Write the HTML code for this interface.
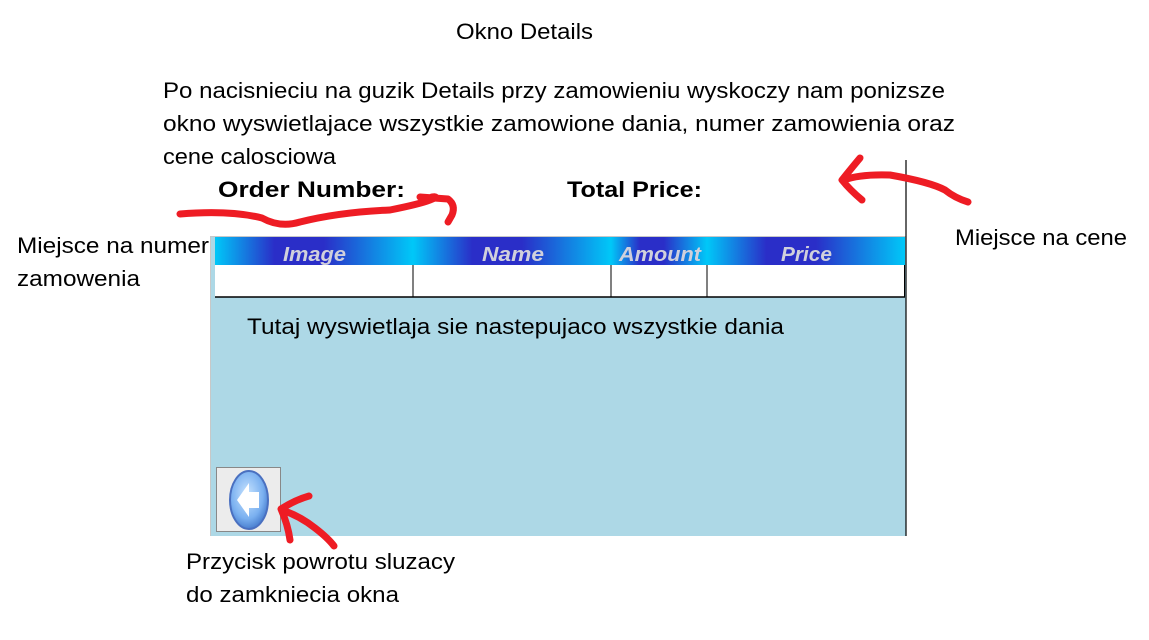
<!DOCTYPE html>
<html><head><meta charset="utf-8"><style>
body{margin:0;width:1149px;height:640px;background:#fff;overflow:hidden;position:relative}
svg{position:absolute;left:0;top:0}
</style></head><body>
<svg width="1149" height="640" xmlns="http://www.w3.org/2000/svg" font-family="Liberation Sans, sans-serif">
<defs>
<linearGradient id="g" x1="0" x2="1" y1="0" y2="0">
<stop offset="0" stop-color="#00c8f8"/><stop offset="0.3" stop-color="#2a2ec8"/><stop offset="0.55" stop-color="#2a2ec8"/><stop offset="1" stop-color="#00c8f8"/>
</linearGradient>
<radialGradient id="b" cx="0.45" cy="0.4" r="0.6"><stop offset="0" stop-color="#c8e4ff"/><stop offset="0.7" stop-color="#7ab0f0"/><stop offset="1" stop-color="#4a80d0"/></radialGradient>
</defs>
<rect x="210" y="236" width="696" height="300" fill="#add8e6"/>
<line x1="210.5" y1="236" x2="210.5" y2="536" stroke="#c8c8c8"/>
<line x1="210" y1="236.5" x2="906" y2="236.5" stroke="#c8c8c8"/>
<line x1="906" y1="160" x2="906" y2="536" stroke="#000" stroke-width="1.2"/>
<rect x="215" y="237" width="198" height="28" fill="url(#g)"/>
<rect x="413" y="237" width="198" height="28" fill="url(#g)"/>
<rect x="611" y="237" width="96" height="28" fill="url(#g)"/>
<rect x="707" y="237" width="198" height="28" fill="url(#g)"/>
<rect x="215" y="265" width="690" height="32" fill="#fff"/>
<line x1="215" y1="297" x2="905" y2="297" stroke="#000" stroke-width="1.5"/>
<line x1="413" y1="265" x2="413" y2="297" stroke="#000"/>
<line x1="611" y1="265" x2="611" y2="297" stroke="#000"/>
<line x1="707" y1="265" x2="707" y2="297" stroke="#000"/>
<line x1="904.5" y1="265" x2="904.5" y2="297" stroke="#000"/>
<g fill="#d0d0dc" font-weight="bold" font-style="italic" font-size="20">
<text x="283" y="261" textLength="63" lengthAdjust="spacingAndGlyphs">Image</text>
<text x="482" y="261" textLength="62" lengthAdjust="spacingAndGlyphs">Name</text>
<text x="619" y="261" textLength="82" lengthAdjust="spacingAndGlyphs">Amount</text>
<text x="781" y="261" textLength="51" lengthAdjust="spacingAndGlyphs">Price</text>
</g>
<rect x="216.5" y="467.5" width="64" height="64" fill="#ececec" stroke="#888"/>
<ellipse cx="249" cy="500" rx="19" ry="29" fill="url(#b)" stroke="#4a70c0" stroke-width="2"/>
<path d="M237 500 L249 483 L249 492 L259 492 L259 508 L249 508 L249 517 Z" fill="#fff"/>
<g fill="#000" font-size="22">
<text x="456" y="39" textLength="137" lengthAdjust="spacingAndGlyphs">Okno Details</text>
<text x="163" y="98" textLength="782" lengthAdjust="spacingAndGlyphs">Po nacisnieciu na guzik Details przy zamowieniu wyskoczy nam ponizsze</text>
<text x="163" y="131" textLength="792" lengthAdjust="spacingAndGlyphs">okno wyswietlajace wszystkie zamowione dania, numer zamowienia oraz</text>
<text x="163" y="164" textLength="173" lengthAdjust="spacingAndGlyphs">cene calosciowa</text>
<text x="218" y="197" font-weight="bold" textLength="187" lengthAdjust="spacingAndGlyphs">Order Number:</text>
<text x="567" y="197" font-weight="bold" textLength="135" lengthAdjust="spacingAndGlyphs">Total Price:</text>
<text x="17" y="253" textLength="192" lengthAdjust="spacingAndGlyphs">Miejsce na numer</text>
<text x="17" y="286" textLength="123" lengthAdjust="spacingAndGlyphs">zamowenia</text>
<text x="955" y="245" textLength="172" lengthAdjust="spacingAndGlyphs">Miejsce na cene</text>
<text x="247" y="334" textLength="537" lengthAdjust="spacingAndGlyphs">Tutaj wyswietlaja sie nastepujaco wszystkie dania</text>
<text x="186" y="569" textLength="269" lengthAdjust="spacingAndGlyphs">Przycisk powrotu sluzacy</text>
<text x="186" y="602" textLength="213" lengthAdjust="spacingAndGlyphs">do zamkniecia okna</text>
</g>
<g fill="none" stroke="#ee1c24" stroke-width="7" stroke-linecap="round" stroke-linejoin="round">
<path d="M180 214 Q230 210 262 218 Q280 228 300 222 Q340 212 390 210 Q420 204 430 200 Q440 196 432 197"/>
<path d="M420 197 L448 199 Q456 205 452 215 L448 222"/>
<path d="M860 158 Q850 170 842 180 Q850 190 862 200"/>
<path d="M844 180 Q860 174 890 175 Q930 182 945 190 Q955 198 968 202"/>
<path d="M309 496 Q295 500 281 509 Q288 525 290 540"/>
<path d="M282 510 Q300 516 315 528 Q328 538 334 546"/>
</g>
</svg>
</body></html>
